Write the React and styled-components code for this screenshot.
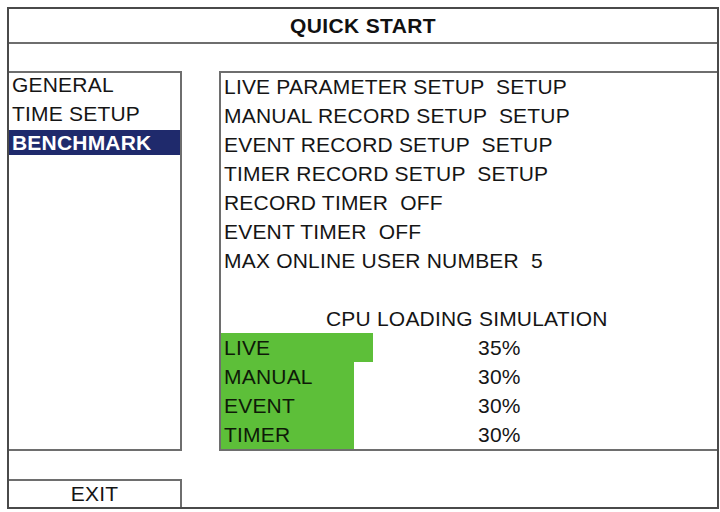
import React from "react";
import styled, { createGlobalStyle } from "styled-components";

const Global = createGlobalStyle`
  html, body { margin: 0; padding: 0; background: #ffffff; }
  body { font-family: "Liberation Sans", Arial, sans-serif; color: #151515; letter-spacing: 0.2px; }
`;

const Frame = styled.div`
  box-sizing: border-box;
  margin: 7px 0 0 7px;
  width: 712px;
  height: 502px;
  border: 2px solid #4a4a4a;
  display: flex;
  flex-direction: column;
  background: #fff;
`;

const Title = styled.div`
  height: 33px;
  border-bottom: 2px solid #6e6e6e;
  display: flex;
  align-items: center;
  justify-content: center;
  font-weight: bold;
  font-size: 21px;
  letter-spacing: 0.35px;
  color: #111;
`;

const Body = styled.div`
  margin-top: 27px;
  height: 380px;
  display: grid;
  grid-template-columns: 173px 1fr;
  column-gap: 37px;
`;

const Panel = styled.div`
  box-sizing: border-box;
  border-top: 2px solid #6e6e6e;
  border-bottom: 2px solid #6e6e6e;
  ${(p) => (p.$side === "left" ? "border-right: 2px solid #6e6e6e;" : "border-left: 2px solid #6e6e6e;")}
`;

const Menu = styled.div`
  display: flex;
  flex-direction: column;
  margin-top: -2px;
`;

const MenuItem = styled.div`
  height: ${(p) => (p.$active ? "25px" : "28.5px")};
  margin-top: ${(p) => (p.$active ? "2px" : "0")};
  display: flex;
  align-items: center;
  padding-left: 3px;
  font-size: 21px;
  font-weight: ${(p) => (p.$active ? "bold" : "normal")};
  background: ${(p) => (p.$active ? "#1f2a6c" : "transparent")};
  color: ${(p) => (p.$active ? "#ffffff" : "#151515")};
  white-space: nowrap;
`;

const Rows = styled.div`
  height: 100%;
  display: grid;
  grid-template-rows: repeat(13, 1fr);
`;

const Row = styled.div`
  display: flex;
  align-items: center;
  padding-left: ${(p) => p.$indent || 3}px;
  font-size: 21px;
  white-space: pre;
`;

const LoadRow = styled.div`
  display: grid;
  grid-template-columns: 257px 1fr;
  align-items: stretch;
  font-size: 21px;
`;

const Bar = styled.div`
  background: #5dbf39;
  display: flex;
  align-items: center;
  padding-left: 3px;
  box-sizing: border-box;
  white-space: nowrap;
  color: #0e1a08;
`;

const Percent = styled.div`
  display: flex;
  align-items: center;
`;

const Footer = styled.div`
  margin-top: 28px;
  flex: 1;
  display: flex;
`;

const ExitButton = styled.div`
  box-sizing: border-box;
  width: 173px;
  border-top: 2px solid #6e6e6e;
  border-right: 2px solid #6e6e6e;
  display: flex;
  align-items: center;
  justify-content: center;
  font-size: 21px;
  padding-bottom: 1px;
`;

const settings = [
  "LIVE PARAMETER SETUP  SETUP",
  "MANUAL RECORD SETUP  SETUP",
  "EVENT RECORD SETUP  SETUP",
  "TIMER RECORD SETUP  SETUP",
  "RECORD TIMER  OFF",
  "EVENT TIMER  OFF",
  "MAX ONLINE USER NUMBER  5",
];

const loads = [
  { label: "LIVE", pct: 35 },
  { label: "MANUAL", pct: 30 },
  { label: "EVENT", pct: 30 },
  { label: "TIMER", pct: 30 },
];

export default function App() {
  return (
    <>
      <Global />
      <Frame>
        <Title>QUICK START</Title>
        <Body>
          <Panel $side="left">
            <Menu>
              <MenuItem>GENERAL</MenuItem>
              <MenuItem>TIME SETUP</MenuItem>
              <MenuItem $active>BENCHMARK</MenuItem>
            </Menu>
          </Panel>
          <Panel $side="right">
            <Rows>
              {settings.map((s) => (
                <Row key={s}>{s}</Row>
              ))}
              <Row />
              <Row $indent={105}>CPU LOADING SIMULATION</Row>
              {loads.map((l) => (
                <LoadRow key={l.label}>
                  <Bar style={{ width: `${18 + l.pct * 3.82}px` }}>{l.label}</Bar>
                  <Percent>{l.pct}%</Percent>
                </LoadRow>
              ))}
            </Rows>
          </Panel>
        </Body>
        <Footer>
          <ExitButton>EXIT</ExitButton>
        </Footer>
      </Frame>
    </>
  );
}
